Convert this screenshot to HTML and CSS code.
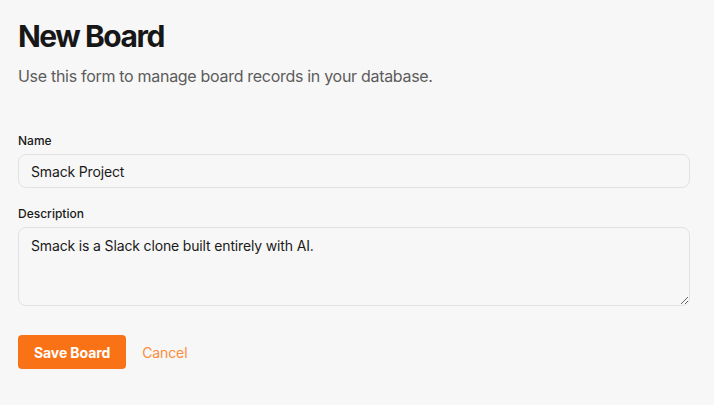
FILE: index.html
```html
<!DOCTYPE html>
<html lang="en">
<head>
<meta charset="utf-8">
<title>New Board</title>
<link rel="stylesheet" href="styles.css">
</head>
<body>
<main class="page">
  <header class="page-header">
    <h1 class="title">New Board</h1>
    <p class="subtitle">Use this form to manage board records in your database.</p>
  </header>
  <form class="form">
    <div class="field">
      <label class="label" for="name">Name</label>
      <input class="input" id="name" type="text" value="Smack Project">
    </div>
    <div class="field">
      <label class="label" for="desc">Description</label>
      <textarea class="input textarea" id="desc">Smack is a Slack clone built entirely with AI.</textarea>
    </div>
    <div class="actions">
      <button class="btn-primary" type="button">Save Board</button>
      <a class="link-cancel" href="#">Cancel</a>
    </div>
  </form>
</main>
</body>
</html>
```
FILE: styles.css
```css
* { box-sizing: border-box; }
html, body {
  margin: 0;
  background: #f7f7f7;
}
body {
  font-family: Inter, "Noto Sans", sans-serif;
  color: #1a1a1a;
}
.page {
  padding: 18px 24px 18px 18px;
}
.page-header {
  display: flex;
  flex-direction: column;
  gap: 10px;
}
.title {
  margin: 0;
  font-size: 30px;
  line-height: 36px;
  font-weight: 700;
  letter-spacing: -1.5px;
  color: #171717;
}
.subtitle {
  margin: 0;
  font-size: 16px;
  line-height: 24px;
  letter-spacing: -0.3px;
  color: #5c5c5c;
}
.form {
  margin-top: 45px;
  display: flex;
  flex-direction: column;
  gap: 18px;
}
.field {
  display: flex;
  flex-direction: column;
  gap: 5px;
}
.label {
  font-size: 12px;
  line-height: 16px;
  font-weight: 500;
  color: #1a1a1a;
}
.input {
  display: block;
  width: 100%;
  height: 34px;
  padding: 6px 12px;
  font-family: inherit;
  font-size: 14px;
  line-height: 20px;
  letter-spacing: -0.15px;
  color: #1a1a1a;
  background: #f7f7f7;
  border: 1px solid #e2e2e2;
  border-radius: 8px;
  outline: none;
}
.textarea {
  height: 79px;
  line-height: 24px;
  resize: vertical;
}
.actions {
  margin-top: 11px;
  display: flex;
  align-items: center;
  gap: 16px;
}
.btn-primary {
  height: 34px;
  padding: 0 16px;
  font-family: inherit;
  font-size: 14px;
  font-weight: 700;
  letter-spacing: -0.1px;
  color: #ffffff;
  background: #f97316;
  border: none;
  border-radius: 4px;
}
.link-cancel {
  font-size: 14px;
  letter-spacing: -0.1px;
  color: #fb8c3c;
  text-decoration: none;
}
```
